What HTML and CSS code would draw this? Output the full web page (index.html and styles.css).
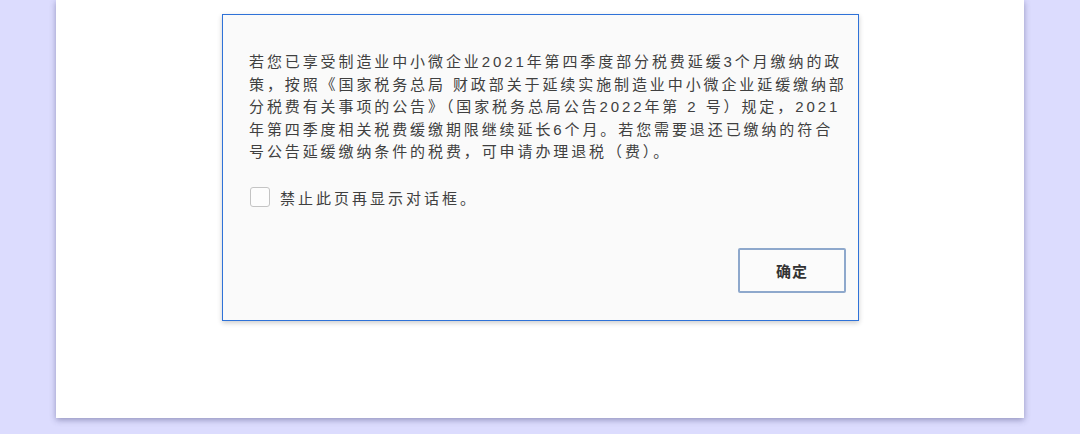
FILE: index.html
```html
<!DOCTYPE html>
<html lang="zh-CN">
<head>
    <meta charset="UTF-8">
    <meta name="viewport" content="width=device-width, initial-scale=1.0">
    <title>提示</title>
    <link rel="stylesheet" href="styles.css">
</head>
<body>
    <div class="page">
        <div class="dialog">
            <p class="dialog-message">若您已享受制造业中小微企业2021年第四季度部分税费延缓3个月缴纳的政<br>策，按照《国家税务总局 财政部关于延续实施制造业中小微企业延缓缴纳部<br>分税费有关事项的公告》（国家税务总局公告2022年第 2 号）规定，2021<br>年第四季度相关税费缓缴期限继续延长6个月。若您需要退还已缴纳的符合<br>号公告延缓缴纳条件的税费，可申请办理退税（费）。</p>
            <label class="dialog-check">
                <span class="check-box"></span>
                <span>禁止此页再显示对话框。</span>
            </label>
            <div class="dialog-actions">
                <button class="button-ok">确定</button>
            </div>
        </div>
    </div>
</body>
</html>
```

FILE: styles.css
```css
:root {
    --page-bg: #dcdcfe;
    --panel-white: #ffffff;
    --dialog-bg: #fafafa;
    --dialog-border: #2f72d8;
    --text-dark: #404040;
}

body {
    margin: 0;
    padding: 0 56px;
    background-color: var(--page-bg);
    font-family: "Liberation Sans", "Noto Sans CJK SC", sans-serif;
    height: 434px;
    overflow: hidden;
}

.page {
    background-color: var(--panel-white);
    height: 418px;
    padding: 14px 0 0 166px;
    box-sizing: border-box;
    box-shadow: 0 2px 6px rgba(60, 60, 110, 0.45);
}

.dialog {
    width: 637px;
    height: 307px;
    box-sizing: border-box;
    background-color: var(--dialog-bg);
    border: 1px solid var(--dialog-border);
    box-shadow: 0 2px 5px rgba(0, 0, 0, 0.2);
    padding: 36px 0 0 26px;
    display: flex;
    flex-direction: column;
}

.dialog-message {
    margin: 0;
    font-size: 15px;
    line-height: 22.5px;
    color: var(--text-dark);
    white-space: nowrap;
    letter-spacing: 2.9px;
}

.dialog-check {
    display: flex;
    align-items: center;
    gap: 10px;
    margin-top: 23px;
    margin-left: 1px;
    font-size: 15px;
    letter-spacing: 3px;
    color: var(--text-dark);
}

.check-box {
    width: 18px;
    height: 18px;
    border: 1px solid #c4c4c4;
    border-radius: 3px;
    background-color: #fdfdfd;
}

.dialog-actions {
    display: flex;
    justify-content: flex-end;
    margin-top: 40px;
    padding-right: 12px;
}

.button-ok {
    width: 108px;
    height: 45px;
    background-color: #fbfbfb;
    border: 2px solid #8ea8cc;
    border-radius: 2px;
    font-family: inherit;
    font-size: 15px;
    font-weight: 700;
    letter-spacing: 1px;
    color: #333333;
    cursor: pointer;
}
```
